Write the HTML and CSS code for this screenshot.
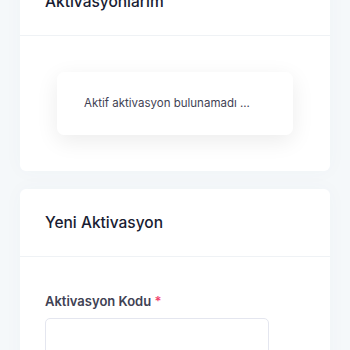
FILE: index.html
```html
<!DOCTYPE html>
<html>

<head>
    <meta charset="utf-8">
    <title>Aktivasyonlarım</title>
    <link rel="stylesheet" href="styles.css">
</head>

<body>
    <div class="content">
        <div class="card card-top">
            <div class="card-header">
                <h3 class="card-title">Aktivasyonlarım</h3>
            </div>
            <div class="card-body">
                <div class="notice">Aktif aktivasyon bulunamadı ...</div>
            </div>
        </div>

        <div class="card">
            <div class="card-header">
                <h3 class="card-title">Yeni Aktivasyon</h3>
            </div>
            <div class="card-body">
                <label class="form-label" for="code">Aktivasyon Kodu <span class="required">*</span></label>
                <input id="code" class="form-control" type="text">
            </div>
        </div>
    </div>
</body>

</html>
```

FILE: styles.css
```css
body {
    font-family: Inter, "Noto Sans", sans-serif;
    margin: 0;
    background-color: #f5f8fa;
    color: #3f4254;
}

.content {
    padding: 0 20px;
    display: flex;
    flex-direction: column;
    gap: 18px;
}

.card {
    background-color: white;
    border-radius: 6px;
    box-shadow: 0 0 20px rgba(76, 87, 125, 0.03);
}

.card-top {
    margin-top: -32px;
}

.card-header {
    height: 67px;
    display: flex;
    align-items: center;
    padding: 0 25px;
    border-bottom: 1px solid #eff2f5;
}

.card-title {
    margin: 0;
    font-size: 15.5px;
    font-weight: 500;
    color: #181c32;
}

.card-body {
    padding: 36px 25px;
}

.notice {
    margin: 0 12px;
    padding: 23px 27px;
    border-radius: 7px;
    background-color: white;
    box-shadow: 0 6px 22px rgba(0, 0, 0, 0.08);
    font-size: 11.5px;
    line-height: 17px;
    white-space: nowrap;
}

.form-label {
    display: block;
    margin-bottom: 9px;
    font-size: 13px;
    font-weight: 600;
    color: #3f4254;
}

.required {
    color: #f1416c;
}

.form-control {
    display: block;
    box-sizing: border-box;
    width: 224px;
    height: 44px;
    border: 1px solid #e4e6ef;
    border-radius: 5px;
    background-color: white;
}
```
